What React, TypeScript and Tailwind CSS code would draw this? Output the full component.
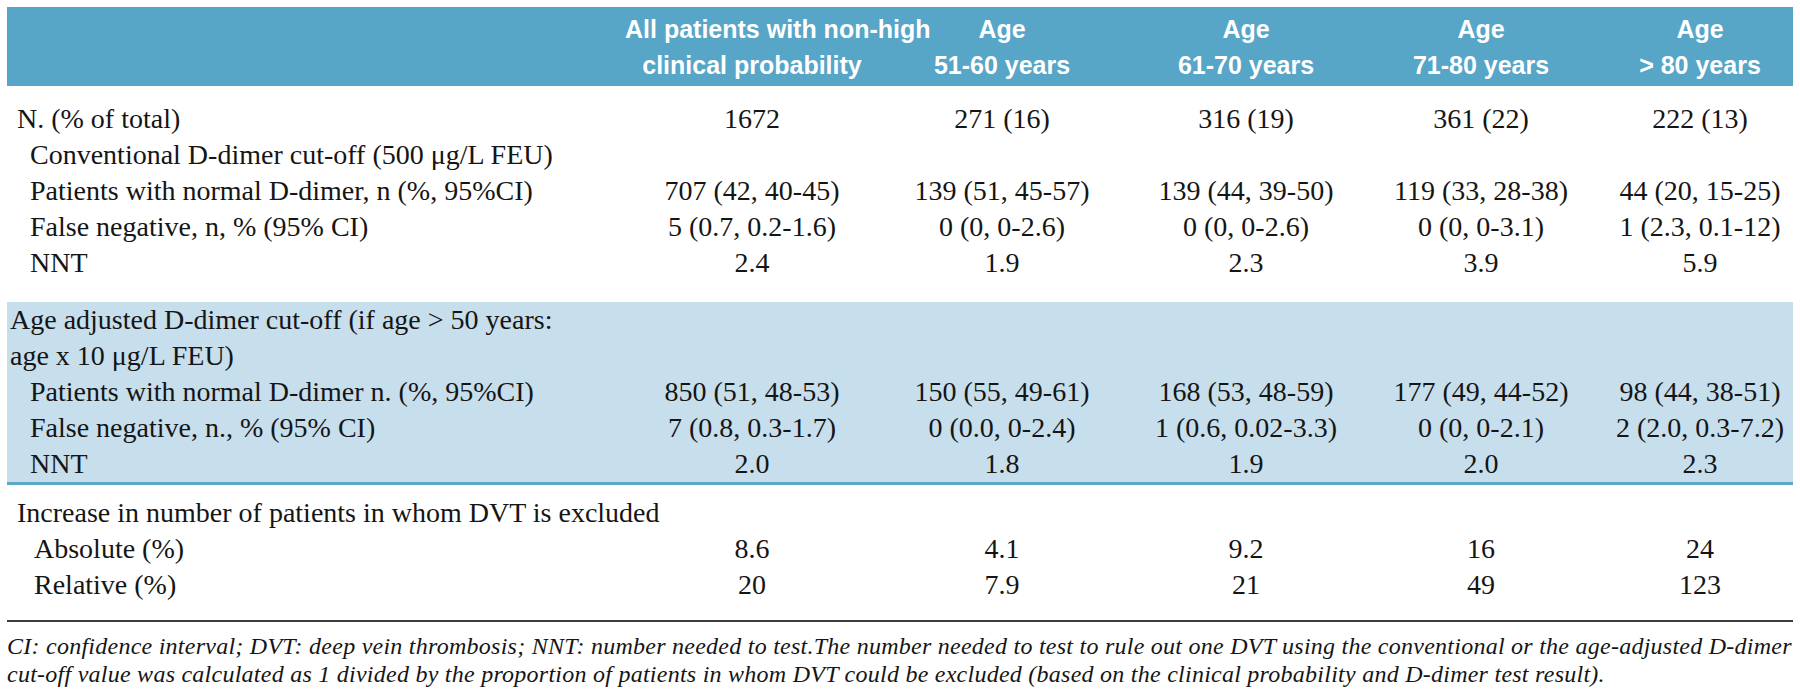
import React from "react";

interface Row {
  label: React.ReactNode;
  indent: string;
  values?: string[];
  pad?: string;
}

const serif = "font-['Liberation_Serif','Times_New_Roman',serif]";

const topRows: Row[] = [
  { label: "N. (% of total)", indent: "pl-[10px]", values: ["1672", "271 (16)", "316 (19)", "361 (22)", "222 (13)"], pad: "pt-[15px]" },
  { label: "Conventional D-dimer cut-off (500 μg/L FEU)", indent: "pl-[23px]" },
  { label: "Patients with normal D-dimer, n (%, 95%CI)", indent: "pl-[23px]", values: ["707 (42, 40-45)", "139 (51, 45-57)", "139 (44, 39-50)", "119 (33, 28-38)", "44 (20, 15-25)"] },
  { label: "False negative, n, % (95% CI)", indent: "pl-[23px]", values: ["5 (0.7, 0.2-1.6)", "0 (0, 0-2.6)", "0 (0, 0-2.6)", "0 (0, 0-3.1)", "1 (2.3, 0.1-12)"] },
  { label: "NNT", indent: "pl-[23px]", values: ["2.4", "1.9", "2.3", "3.9", "5.9"], pad: "pb-[21px]" },
];

const adjustedRows: Row[] = [
  {
    label: (
      <>
        Age adjusted D-dimer cut-off (if age &gt; 50 years:
        <br />
        age x 10 μg/L FEU)
      </>
    ),
    indent: "pl-[3px]",
  },
  { label: "Patients with normal D-dimer n. (%, 95%CI)", indent: "pl-[23px]", values: ["850 (51, 48-53)", "150 (55, 49-61)", "168 (53, 48-59)", "177 (49, 44-52)", "98 (44, 38-51)"] },
  { label: "False negative, n., % (95% CI)", indent: "pl-[23px]", values: ["7 (0.8, 0.3-1.7)", "0 (0.0, 0-2.4)", "1 (0.6, 0.02-3.3)", "0 (0, 0-2.1)", "2 (2.0, 0.3-7.2)"] },
  { label: "NNT", indent: "pl-[23px]", values: ["2.0", "1.8", "1.9", "2.0", "2.3"] },
];

const increaseRows: Row[] = [
  { label: "Increase in number of patients in whom DVT is excluded", indent: "pl-[10px]", pad: "pt-[10px]" },
  { label: "Absolute (%)", indent: "pl-[27px]", values: ["8.6", "4.1", "9.2", "16", "24"] },
  { label: "Relative (%)", indent: "pl-[27px]", values: ["20", "7.9", "21", "49", "123"], pad: "pb-[17px]" },
];

const headers: React.ReactNode[] = [
  <>All patients with non-high<br />clinical probability</>,
  <>Age<br />51-60 years</>,
  <>Age<br />61-70 years</>,
  <>Age<br />71-80 years</>,
  <>Age<br />&gt; 80 years</>,
];

const BodyRow: React.FC<{ row: Row }> = ({ row }) => {
  const pad = row.pad ?? "";
  if (!row.values) {
    return (
      <tr>
        <td colSpan={6} className={`${row.indent} ${pad} whitespace-nowrap`}>
          {row.label}
        </td>
      </tr>
    );
  }
  return (
    <tr>
      <td className={`${row.indent} ${pad} whitespace-nowrap`}>{row.label}</td>
      {row.values.map((v, i) => (
        <td key={i} className={`${pad} text-center whitespace-nowrap ${i === 4 ? "pl-3" : ""}`}>
          {v}
        </td>
      ))}
    </tr>
  );
};

const App: React.FC = () => {
  return (
    <div className="w-[1800px] h-[693px] bg-white pt-[7px] pl-[7px]">
      <table className={`w-[1786px] table-fixed border-collapse text-[28px] leading-[36px] text-[#151515] ${serif}`}>
        <colgroup>
          <col className="w-[618px]" />
          <col className="w-[254px]" />
          <col className="w-[246px]" />
          <col className="w-[242px]" />
          <col className="w-[228px]" />
          <col className="w-[198px]" />
        </colgroup>
        <thead>
          <tr className="bg-[#57a5c7] text-white">
            <th className="h-[79px]" />
            {headers.map((h, i) => (
              <th
                key={i}
                className={`h-[79px] p-0 text-center align-middle whitespace-nowrap font-['Liberation_Sans',Arial,sans-serif] text-[25px] leading-[36px] font-bold ${i === 4 ? "pl-3" : ""}`}
              >
                {h}
              </th>
            ))}
          </tr>
        </thead>
        <tbody>
          {topRows.map((r, i) => (
            <BodyRow key={i} row={r} />
          ))}
        </tbody>
        <tbody className="bg-[#c7deec] border-b-[3px] border-[#5ea7c7]">
          {adjustedRows.map((r, i) => (
            <BodyRow key={i} row={r} />
          ))}
        </tbody>
        <tbody className="border-b-2 border-[#3c3c3c]">
          {increaseRows.map((r, i) => (
            <BodyRow key={i} row={r} />
          ))}
        </tbody>
      </table>
      <div className={`mt-[10px] w-[1786px] italic text-[24px] tracking-[0.25px] leading-[28px] text-[#151515] ${serif}`}>
        <div className="whitespace-nowrap">
          CI: confidence interval; DVT: deep vein thrombosis; NNT: number needed to test.The number needed to test to rule out one DVT using the conventional or the age-adjusted D-dimer
        </div>
        <div className="whitespace-nowrap">
          cut-off value was calculated as 1 divided by the proportion of patients in whom DVT could be excluded (based on the clinical probability and D-dimer test result).
        </div>
      </div>
    </div>
  );
};

export default App;
